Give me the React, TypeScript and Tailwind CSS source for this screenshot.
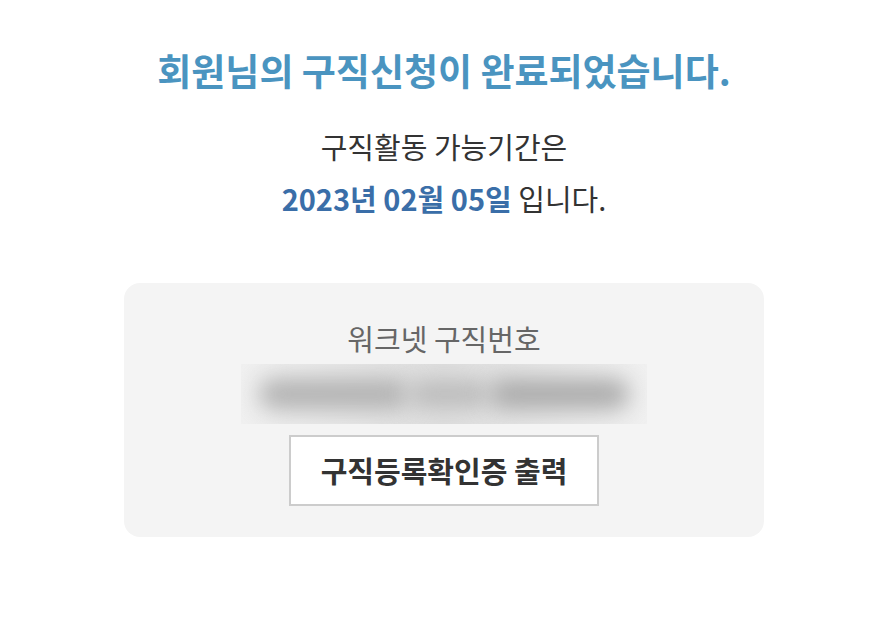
export default function App() {
  const font = { fontFamily: '"Noto Sans CJK KR", "Noto Sans", sans-serif' }

  return (
    <div className="w-[888px] h-[622px] bg-white flex flex-col items-center" style={font}>
      <h1 className="mt-[44px] text-[37px] leading-[52px] font-bold text-[#4a94c0]">
        회원님의 구직신청이 완료되었습니다.
      </h1>
      <p className="mt-[24px] text-[29px] leading-[52px] text-[#333]">구직활동 가능기간은</p>
      <p className="text-[29px] leading-[52px] text-[#333]">
        <span className="font-bold text-[#3a6ea8]">2023년 02월 05일</span> 입니다.
      </p>

      <div className="mt-[59px] w-[640px] h-[254px] rounded-[16px] bg-[#f4f4f4] flex flex-col items-center">
        <p className="mt-[36px] text-[29px] leading-[38px] text-[#666]">워크넷 구직번호</p>
        {/* masked number */}
        <div className="mt-[7px] w-[406px] h-[60px] bg-gradient-to-r from-[#f0f0f0] via-[#dedede] to-[#f0f0f0] flex items-center justify-center overflow-hidden">
          <div className="w-[150px] h-[30px] rounded-full bg-[#b2b2b2] blur-[11px]" />
          <div className="w-[80px] h-[26px] rounded-full bg-[#bababa] blur-[11px]" />
          <div className="w-[140px] h-[30px] rounded-full bg-[#ababab] blur-[11px]" />
        </div>
        <button className="mt-[11px] w-[310px] h-[71px] border-2 border-[#cccccc] bg-white text-[29px] font-bold text-[#333]">
          구직등록확인증 출력
        </button>
      </div>
    </div>
  )
}
